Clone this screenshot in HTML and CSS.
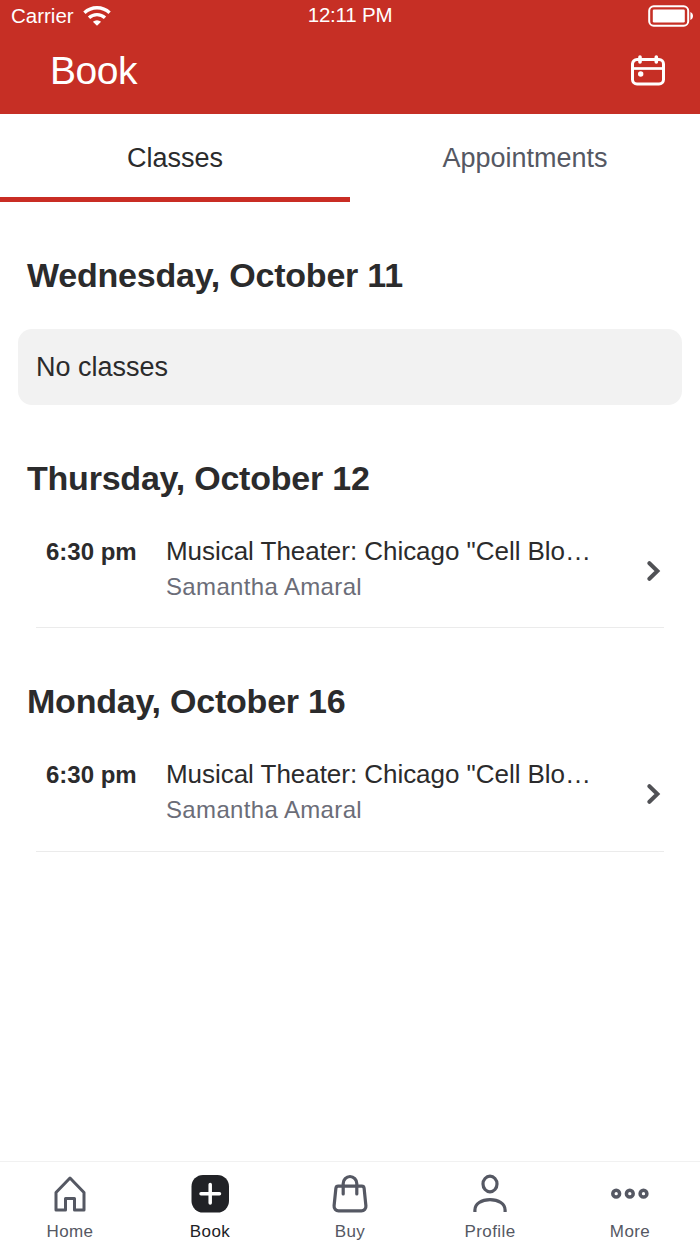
FILE: index.html
```html
<!DOCTYPE html>
<html lang="en">

<head>
    <meta charset="UTF-8">
    <meta name="viewport" content="width=device-width, initial-scale=1.0">
    <title>Book</title>

    <link rel="stylesheet" href="styles.css">
</head>

<body>

    <header class="header">
        <div class="status">
            <div class="carrier">
                <span>Carrier</span>
                <svg class="wifi" width="28" height="20" viewBox="0 0 28 20">
                    <path d="M1.4 6.8a18.2 18.2 0 0 1 25.2 0M6 11.8a11.7 11.7 0 0 1 16 0" fill="none" stroke="#fff" stroke-width="3.3" />
                    <path d="M14 19.8l-4.1-4a6 6 0 0 1 8.2 0z" fill="#fff" />
                </svg>
            </div>
            <span class="clock">12:11 PM</span>
            <svg class="battery" width="46" height="22" viewBox="0 0 46 22">
                <rect x="2.2" y="1.3" width="39" height="19.4" rx="4.5" fill="none" stroke="#fff" stroke-width="2" />
                <rect x="5.8" y="4.6" width="32" height="12.8" rx="1.2" fill="#fff" />
                <path d="M43.4 7c1.6.7 2.6 2.2 2.6 4s-1 3.3-2.6 4z" fill="#fff" />
            </svg>
        </div>
        <div class="titlebar">
            <h1 class="title">Book</h1>
            <svg class="calendar" width="36" height="32" viewBox="0 0 36 32" fill="none" stroke="#fff" stroke-width="3">
                <rect x="2.5" y="4.5" width="31" height="24.5" rx="4.5" />
                <path d="M2.5 13.5h31" stroke-width="2.7" />
                <path d="M10 2v5M26.3 2v5" stroke-width="3.6" stroke-linecap="round" />
                <circle cx="10.7" cy="19" r="2.7" fill="#fff" stroke="none" />
            </svg>
        </div>
    </header>

    <nav class="tabs">
        <a class="tab active">Classes</a>
        <a class="tab">Appointments</a>
    </nav>

    <main class="schedule">
        <section class="day">
            <h2>Wednesday, October 11</h2>
            <div class="empty">No classes</div>
        </section>

        <section class="day">
            <h2>Thursday, October 12</h2>
            <div class="event">
                <div class="time">6:30 pm</div>
                <div class="info">
                    <div class="name">Musical Theater: Chicago "Cell Blo…</div>
                    <div class="teacher">Samantha Amaral</div>
                </div>
                <svg class="arrow" width="14" height="20" viewBox="0 0 14 20">
                    <path d="M2.4 2.200l8 7.800-8 7.800" fill="none" stroke="#505155" stroke-width="4" stroke-linecap="round" />
                </svg>
            </div>
        </section>

        <section class="day">
            <h2>Monday, October 16</h2>
            <div class="event">
                <div class="time">6:30 pm</div>
                <div class="info">
                    <div class="name">Musical Theater: Chicago "Cell Blo…</div>
                    <div class="teacher">Samantha Amaral</div>
                </div>
                <svg class="arrow" width="14" height="20" viewBox="0 0 14 20">
                    <path d="M2.4 2.200l8 7.800-8 7.800" fill="none" stroke="#505155" stroke-width="4" stroke-linecap="round" />
                </svg>
            </div>
        </section>
    </main>

    <nav class="bottom">
        <a class="item">
            <svg width="40" height="40" viewBox="0 0 40 40" fill="none" stroke="#555863" stroke-width="3" stroke-linejoin="round">
                <path d="M6 18.5L20 4l14 14.5V36h-9.5V24.500h-9V36H6z" />
            </svg>
            <span>Home</span>
        </a>
        <a class="item current">
            <svg width="40" height="40" viewBox="0 0 40 40">
                <rect x="1.5" y="1" width="37.5" height="37.5" rx="11.5" fill="#212226" />
                <path d="M20.2 10.500v18.500M11 19.700h18.500" stroke="#fff" stroke-width="3.500" stroke-linecap="round" />
            </svg>
            <span>Book</span>
        </a>
        <a class="item">
            <svg width="40" height="40" viewBox="0 0 40 40" fill="none" stroke="#555863" stroke-width="3.2">
                <path d="M8.2 12.200h23.600a2.300 2.300 0 0 1 2.300 2l1.800 17.600a4.500 4.500 0 0 1-4.500 5H8.600a4.500 4.500 0 0 1-4.500-5L5.900 14.200a2.300 2.300 0 0 1 2.300-2z" />
                <path d="M13.200 20V9.500a6.800 7 0 0 1 13.600 0V20" stroke-linecap="round" />
            </svg>
            <span>Buy</span>
        </a>
        <a class="item">
            <svg width="40" height="40" viewBox="0 0 40 40" fill="none" stroke="#555863" stroke-width="3.2">
                <ellipse cx="20" cy="10" rx="7" ry="7.8" />
                <path d="M4.900 38v-2c0-6 6.500-10.400 15.100-10.400s15.100 4.400 15.100 10.400v2" />
            </svg>
            <span>Profile</span>
        </a>
        <a class="item">
            <svg width="40" height="40" viewBox="0 0 40 40" fill="none" stroke="#555863" stroke-width="3.5">
                <circle cx="6.2" cy="19.7" r="3.4" />
                <circle cx="19.8" cy="19.7" r="3.4" />
                <circle cx="33.5" cy="19.7" r="3.4" />
            </svg>
            <span>More</span>
        </a>
    </nav>

</body>

</html>
```
FILE: styles.css
```css
* {
    box-sizing: border-box;
}

body {
    display: flex;
    flex-direction: column;
    height: 1244px;
    margin: 0;
    background-color: white;
    color: #2b2b2c;
    font-family: "Liberation Sans", Arial, sans-serif;
}

svg {
    display: block;
}

h1,
h2 {
    margin: 0;
}

.header {
    height: 114px;
    background-color: #c62f25;
    color: white;
}

.status {
    display: grid;
    grid-template-columns: 1fr auto 1fr;
    align-items: center;
    height: 32px;
    padding: 0 7px 0 11px;
    font-size: 20.5px;
    line-height: 32px;
}

.carrier {
    display: flex;
    align-items: center;
    gap: 9px;
}

.clock {
    margin: -2px 4px 0 0;
    letter-spacing: -0.2px;
}

.battery {
    justify-self: end;
}

.titlebar {
    display: flex;
    justify-content: space-between;
    align-items: center;
    height: 78px;
    padding: 0 34px 0 50px;
}

.title {
    font-size: 39px;
    font-weight: normal;
    letter-spacing: -0.5px;
}

.tabs {
    display: flex;
    height: 88px;
}

.tab {
    flex: 1;
    border-bottom: 5px solid transparent;
    color: #555863;
    font-size: 27px;
    line-height: 88px;
    text-align: center;
}

.active {
    border-color: #c92d24;
    color: #2b2b2c;
}

.schedule {
    flex: 1;
    padding: 53px 18px 0;
}

.day {
    margin-bottom: 53px;
}

.day h2 {
    padding-left: 9px;
    font-size: 34px;
    letter-spacing: -0.22px;
    line-height: 40px;
}

.empty {
    height: 76px;
    margin-top: 34px;
    padding-left: 18px;
    border-radius: 14px;
    background-color: #f2f2f2;
    font-size: 27px;
    line-height: 76px;
}

.event {
    display: flex;
    height: 130.4px;
    margin: 0 18px;
    padding: 36px 3px 0 10px;
    border-bottom: 1px solid #ebebeb;
}

.time {
    width: 120px;
    font-size: 24px;
    font-weight: bold;
    line-height: 35px;
}

.info {
    flex: 1;
    white-space: nowrap;
}

.name {
    font-size: 26px;
    letter-spacing: -0.04px;
    line-height: 35px;
}

.teacher {
    color: #6b6d78;
    font-size: 24px;
    letter-spacing: 0.35px;
    line-height: 35px;
}

.arrow {
    margin-top: 27px;
}

.bottom {
    display: flex;
    height: 83px;
    border-top: 1px solid #f1f1f1;
}

.item {
    display: flex;
    flex: 1;
    flex-direction: column;
    align-items: center;
    padding-top: 12px;
    color: #555863;
    font-size: 17px;
    letter-spacing: 0.4px;
    line-height: 20px;
}

.item span {
    margin-top: 8px;
}

.current {
    color: #212226;
}
```
